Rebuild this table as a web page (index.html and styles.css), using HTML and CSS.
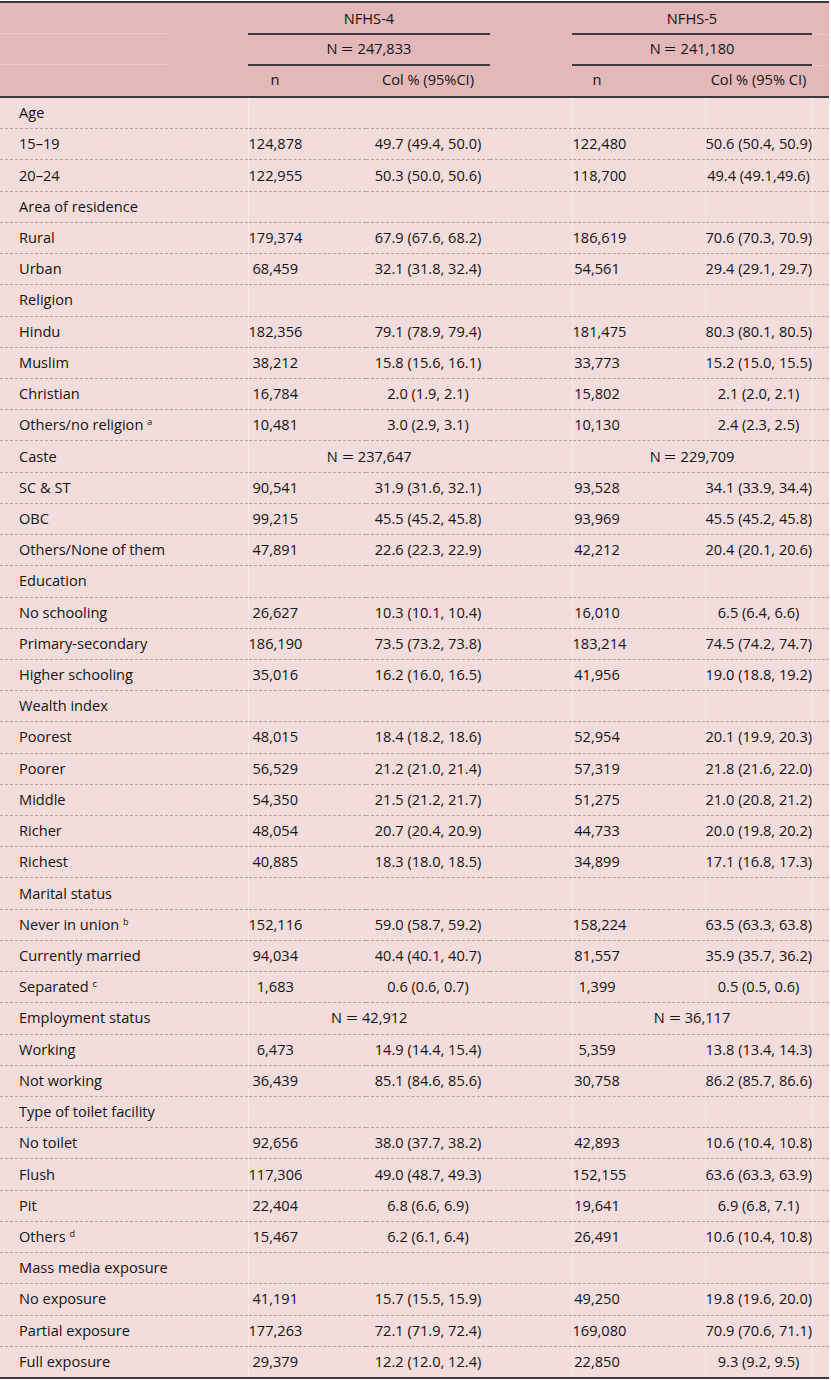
FILE: index.html
```html
<!DOCTYPE html>
<html lang="en">
<head>
<meta charset="utf-8">
<title>NFHS-4 vs NFHS-5</title>
<link rel="stylesheet" href="styles.css">
</head>
<body>
<table class="tbl">
  <colgroup>
    <col class="c-lbl"><col class="c-n4"><col class="c-p4"><col class="c-gap"><col class="c-n5"><col class="c-p5"><col class="c-rp">
  </colgroup>
  <thead>
    <tr class="h1">
      <th class="h-lbl"></th>
      <th colspan="2" class="grp">NFHS-4</th>
      <th></th>
      <th colspan="2" class="grp">NFHS-5</th>
      <th class="h-rp"></th>
    </tr>
    <tr class="h2">
      <th class="h-lbl"></th>
      <th colspan="2" class="grp">N <span class="eq">=</span> 247,833</th>
      <th></th>
      <th colspan="2" class="grp">N <span class="eq">=</span> 241,180</th>
      <th class="h-rp"></th>
    </tr>
    <tr class="h3">
      <th></th>
      <th class="n">n</th>
      <th class="p">Col % (95%CI)</th>
      <th></th>
      <th class="n n5">n</th>
      <th class="p">Col % (95% CI)</th>
      <th></th>
    </tr>
  </thead>
  <tbody>
    <tr><td class="lbl">Age</td><td class="n vl"></td><td class="p"></td><td></td><td class="n n5 vl"></td><td class="p vl"></td><td class="rp vl"></td></tr>
    <tr><td class="lbl">15–19</td><td class="n vl">124,878</td><td class="p">49.7 (49.4, 50.0)</td><td></td><td class="n n5 vl">122,480</td><td class="p vl">50.6 (50.4, 50.9)</td><td class="rp vl"></td></tr>
    <tr><td class="lbl">20–24</td><td class="n vl">122,955</td><td class="p">50.3 (50.0, 50.6)</td><td></td><td class="n n5 vl">118,700</td><td class="p vl">49.4 (49.1,49.6)</td><td class="rp vl"></td></tr>
    <tr><td class="lbl">Area of residence</td><td class="n vl"></td><td class="p"></td><td></td><td class="n n5 vl"></td><td class="p vl"></td><td class="rp vl"></td></tr>
    <tr><td class="lbl">Rural</td><td class="n vl">179,374</td><td class="p">67.9 (67.6, 68.2)</td><td></td><td class="n n5 vl">186,619</td><td class="p vl">70.6 (70.3, 70.9)</td><td class="rp vl"></td></tr>
    <tr><td class="lbl">Urban</td><td class="n vl">68,459</td><td class="p">32.1 (31.8, 32.4)</td><td></td><td class="n n5 vl">54,561</td><td class="p vl">29.4 (29.1, 29.7)</td><td class="rp vl"></td></tr>
    <tr><td class="lbl">Religion</td><td class="n vl"></td><td class="p"></td><td></td><td class="n n5 vl"></td><td class="p vl"></td><td class="rp vl"></td></tr>
    <tr><td class="lbl">Hindu</td><td class="n vl">182,356</td><td class="p">79.1 (78.9, 79.4)</td><td></td><td class="n n5 vl">181,475</td><td class="p vl">80.3 (80.1, 80.5)</td><td class="rp vl"></td></tr>
    <tr><td class="lbl">Muslim</td><td class="n vl">38,212</td><td class="p">15.8 (15.6, 16.1)</td><td></td><td class="n n5 vl">33,773</td><td class="p vl">15.2 (15.0, 15.5)</td><td class="rp vl"></td></tr>
    <tr><td class="lbl">Christian</td><td class="n vl">16,784</td><td class="p">2.0 (1.9, 2.1)</td><td></td><td class="n n5 vl">15,802</td><td class="p vl">2.1 (2.0, 2.1)</td><td class="rp vl"></td></tr>
    <tr><td class="lbl">Others/no religion <sup>a</sup></td><td class="n vl">10,481</td><td class="p">3.0 (2.9, 3.1)</td><td></td><td class="n n5 vl">10,130</td><td class="p vl">2.4 (2.3, 2.5)</td><td class="rp vl"></td></tr>
    <tr><td class="lbl">Caste</td><td colspan="2" class="span vl">N <span class="eq">=</span> 237,647</td><td></td><td colspan="2" class="span vl">N <span class="eq">=</span> 229,709</td><td class="rp vl"></td></tr>
    <tr><td class="lbl">SC &amp; ST</td><td class="n vl">90,541</td><td class="p">31.9 (31.6, 32.1)</td><td></td><td class="n n5 vl">93,528</td><td class="p vl">34.1 (33.9, 34.4)</td><td class="rp vl"></td></tr>
    <tr><td class="lbl">OBC</td><td class="n vl">99,215</td><td class="p">45.5 (45.2, 45.8)</td><td></td><td class="n n5 vl">93,969</td><td class="p vl">45.5 (45.2, 45.8)</td><td class="rp vl"></td></tr>
    <tr><td class="lbl">Others/None of them</td><td class="n vl">47,891</td><td class="p">22.6 (22.3, 22.9)</td><td></td><td class="n n5 vl">42,212</td><td class="p vl">20.4 (20.1, 20.6)</td><td class="rp vl"></td></tr>
    <tr><td class="lbl">Education</td><td class="n vl"></td><td class="p"></td><td></td><td class="n n5 vl"></td><td class="p vl"></td><td class="rp vl"></td></tr>
    <tr><td class="lbl">No schooling</td><td class="n vl">26,627</td><td class="p">10.3 (10.1, 10.4)</td><td></td><td class="n n5 vl">16,010</td><td class="p vl">6.5 (6.4, 6.6)</td><td class="rp vl"></td></tr>
    <tr><td class="lbl">Primary-secondary</td><td class="n vl">186,190</td><td class="p">73.5 (73.2, 73.8)</td><td></td><td class="n n5 vl">183,214</td><td class="p vl">74.5 (74.2, 74.7)</td><td class="rp vl"></td></tr>
    <tr><td class="lbl">Higher schooling</td><td class="n vl">35,016</td><td class="p">16.2 (16.0, 16.5)</td><td></td><td class="n n5 vl">41,956</td><td class="p vl">19.0 (18.8, 19.2)</td><td class="rp vl"></td></tr>
    <tr><td class="lbl">Wealth index</td><td class="n vl"></td><td class="p"></td><td></td><td class="n n5 vl"></td><td class="p vl"></td><td class="rp vl"></td></tr>
    <tr><td class="lbl">Poorest</td><td class="n vl">48,015</td><td class="p">18.4 (18.2, 18.6)</td><td></td><td class="n n5 vl">52,954</td><td class="p vl">20.1 (19.9, 20.3)</td><td class="rp vl"></td></tr>
    <tr><td class="lbl">Poorer</td><td class="n vl">56,529</td><td class="p">21.2 (21.0, 21.4)</td><td></td><td class="n n5 vl">57,319</td><td class="p vl">21.8 (21.6, 22.0)</td><td class="rp vl"></td></tr>
    <tr><td class="lbl">Middle</td><td class="n vl">54,350</td><td class="p">21.5 (21.2, 21.7)</td><td></td><td class="n n5 vl">51,275</td><td class="p vl">21.0 (20.8, 21.2)</td><td class="rp vl"></td></tr>
    <tr><td class="lbl">Richer</td><td class="n vl">48,054</td><td class="p">20.7 (20.4, 20.9)</td><td></td><td class="n n5 vl">44,733</td><td class="p vl">20.0 (19.8, 20.2)</td><td class="rp vl"></td></tr>
    <tr><td class="lbl">Richest</td><td class="n vl">40,885</td><td class="p">18.3 (18.0, 18.5)</td><td></td><td class="n n5 vl">34,899</td><td class="p vl">17.1 (16.8, 17.3)</td><td class="rp vl"></td></tr>
    <tr><td class="lbl">Marital status</td><td class="n vl"></td><td class="p"></td><td></td><td class="n n5 vl"></td><td class="p vl"></td><td class="rp vl"></td></tr>
    <tr><td class="lbl">Never in union <sup>b</sup></td><td class="n vl">152,116</td><td class="p">59.0 (58.7, 59.2)</td><td></td><td class="n n5 vl">158,224</td><td class="p vl">63.5 (63.3, 63.8)</td><td class="rp vl"></td></tr>
    <tr><td class="lbl">Currently married</td><td class="n vl">94,034</td><td class="p">40.4 (40.1, 40.7)</td><td></td><td class="n n5 vl">81,557</td><td class="p vl">35.9 (35.7, 36.2)</td><td class="rp vl"></td></tr>
    <tr><td class="lbl">Separated <sup>c</sup></td><td class="n vl">1,683</td><td class="p">0.6 (0.6, 0.7)</td><td></td><td class="n n5 vl">1,399</td><td class="p vl">0.5 (0.5, 0.6)</td><td class="rp vl"></td></tr>
    <tr><td class="lbl">Employment status</td><td colspan="2" class="span vl">N <span class="eq">=</span> 42,912</td><td></td><td colspan="2" class="span vl">N <span class="eq">=</span> 36,117</td><td class="rp vl"></td></tr>
    <tr><td class="lbl">Working</td><td class="n vl">6,473</td><td class="p">14.9 (14.4, 15.4)</td><td></td><td class="n n5 vl">5,359</td><td class="p vl">13.8 (13.4, 14.3)</td><td class="rp vl"></td></tr>
    <tr><td class="lbl">Not working</td><td class="n vl">36,439</td><td class="p">85.1 (84.6, 85.6)</td><td></td><td class="n n5 vl">30,758</td><td class="p vl">86.2 (85.7, 86.6)</td><td class="rp vl"></td></tr>
    <tr><td class="lbl">Type of toilet facility</td><td class="n vl"></td><td class="p"></td><td></td><td class="n n5 vl"></td><td class="p vl"></td><td class="rp vl"></td></tr>
    <tr><td class="lbl">No toilet</td><td class="n vl">92,656</td><td class="p">38.0 (37.7, 38.2)</td><td></td><td class="n n5 vl">42,893</td><td class="p vl">10.6 (10.4, 10.8)</td><td class="rp vl"></td></tr>
    <tr><td class="lbl">Flush</td><td class="n vl">117,306</td><td class="p">49.0 (48.7, 49.3)</td><td></td><td class="n n5 vl">152,155</td><td class="p vl">63.6 (63.3, 63.9)</td><td class="rp vl"></td></tr>
    <tr><td class="lbl">Pit</td><td class="n vl">22,404</td><td class="p">6.8 (6.6, 6.9)</td><td></td><td class="n n5 vl">19,641</td><td class="p vl">6.9 (6.8, 7.1)</td><td class="rp vl"></td></tr>
    <tr><td class="lbl">Others <sup>d</sup></td><td class="n vl">15,467</td><td class="p">6.2 (6.1, 6.4)</td><td></td><td class="n n5 vl">26,491</td><td class="p vl">10.6 (10.4, 10.8)</td><td class="rp vl"></td></tr>
    <tr><td class="lbl">Mass media exposure</td><td class="n vl"></td><td class="p"></td><td></td><td class="n n5 vl"></td><td class="p vl"></td><td class="rp vl"></td></tr>
    <tr><td class="lbl">No exposure</td><td class="n vl">41,191</td><td class="p">15.7 (15.5, 15.9)</td><td></td><td class="n n5 vl">49,250</td><td class="p vl">19.8 (19.6, 20.0)</td><td class="rp vl"></td></tr>
    <tr><td class="lbl">Partial exposure</td><td class="n vl">177,263</td><td class="p">72.1 (71.9, 72.4)</td><td></td><td class="n n5 vl">169,080</td><td class="p vl">70.9 (70.6, 71.1)</td><td class="rp vl"></td></tr>
    <tr><td class="lbl">Full exposure</td><td class="n vl">29,379</td><td class="p">12.2 (12.0, 12.4)</td><td></td><td class="n n5 vl">22,850</td><td class="p vl">9.3 (9.2, 9.5)</td><td class="rp vl"></td></tr>
  </tbody>
</table>
</body>
</html>
```

FILE: styles.css
```css
html, body {
  margin: 0;
  padding: 0;
  background: #ffffff;
}

body {
  padding-top: 1px;
  font-family: "Open Sans", "Noto Sans", sans-serif;
  font-size: 14.6px;
  color: #141414;
}

.tbl {
  width: 829px;
  table-layout: fixed;
  border-collapse: collapse;
  border-top: 2px solid #3d3a3a;
  border-bottom: 2px solid #3d3a3a;
}

.c-lbl { width: 248px; }
.c-n4 { width: 118px; }
.c-p4 { width: 124px; }
.c-gap { width: 82px; }
.c-n5 { width: 133px; }
.c-p5 { width: 107px; }
.c-rp { width: 17px; }

th, td {
  padding: 0;
  white-space: nowrap;
  font-weight: normal;
  text-align: center;
}

thead th {
  background: #e3b8b8;
}

.h1 th { height: 29px; padding-bottom: 1px; }
.h2 th { height: 26px; padding-bottom: 3px; }
.h3 th { height: 26px; padding-bottom: 4px; border-bottom: 2px solid #3d3a3a; }

.grp {
  border-bottom: 2px solid #3d3a3a;
}

.eq {
  display: inline-block;
  margin: 0 2px;
  transform: scaleX(1.45);
}

.h-lbl {
  background-image: linear-gradient(#ecc8c8, #ecc8c8);
  background-repeat: no-repeat;
  background-position: left bottom;
  background-size: 167px 1px;
}

.h-rp {
  border-bottom: 1px solid #ecc8c8;
}

tbody td {
  background: #f3dcdc;
  height: 28.22px;
  padding-bottom: 2px;
  border-bottom: 1px dashed #b0a3a3;
}

tbody tr:last-child td {
  border-bottom: none;
}

.lbl {
  text-align: left;
  padding-left: 19px;
}

.n { padding-right: 64px; }
.n5 { padding-right: 83px; }

.vl {
  border-left: 1px solid rgba(255, 255, 255, 0.35);
}

sup {
  font-size: 9px;
  vertical-align: 5px;
  line-height: 0;
}
```
